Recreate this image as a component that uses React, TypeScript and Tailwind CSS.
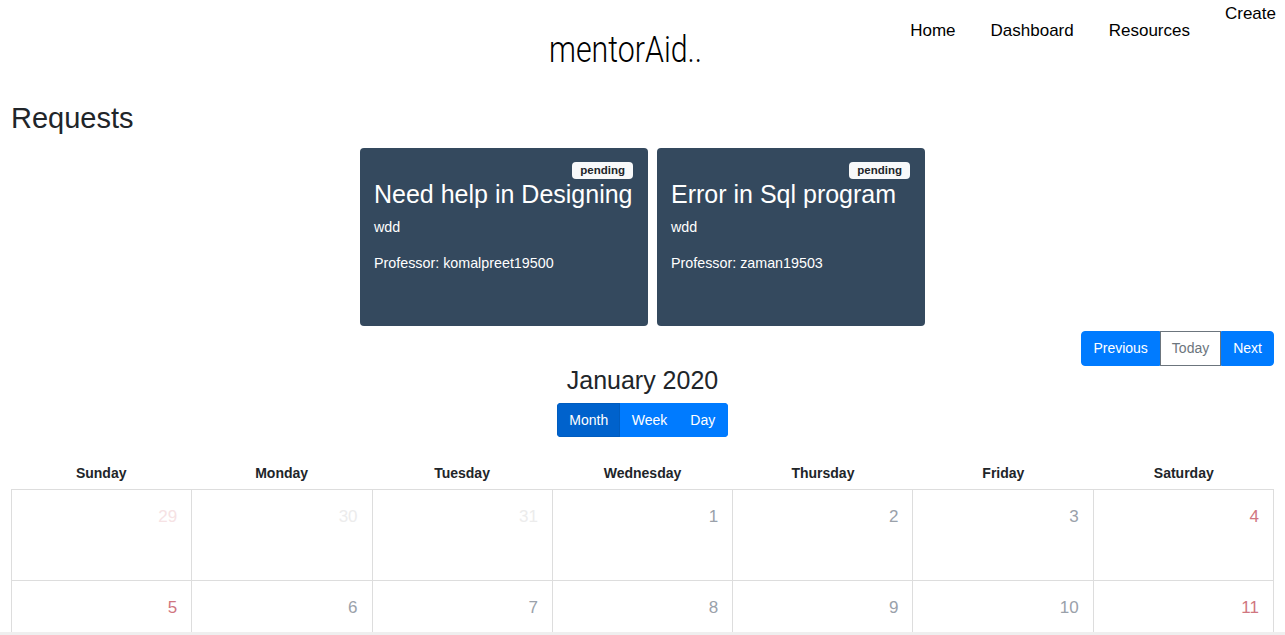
import React from "react";

const weeks: { d: number; muted?: boolean }[][] = [
  [{ d: 29, muted: true }, { d: 30, muted: true }, { d: 31, muted: true }, { d: 1 }, { d: 2 }, { d: 3 }, { d: 4 }],
  [{ d: 5 }, { d: 6 }, { d: 7 }, { d: 8 }, { d: 9 }, { d: 10 }, { d: 11 }],
  [{ d: 12 }, { d: 13 }, { d: 14 }, { d: 15 }, { d: 16 }, { d: 17 }, { d: 18 }],
  [{ d: 19 }, { d: 20 }, { d: 21 }, { d: 22 }, { d: 23 }, { d: 24 }, { d: 25 }],
  [{ d: 26 }, { d: 27 }, { d: 28 }, { d: 29 }, { d: 30 }, { d: 31 }, { d: 1, muted: true }],
];

const days = ["Sunday", "Monday", "Tuesday", "Wednesday", "Thursday", "Friday", "Saturday"];

function numColor(col: number, muted?: boolean) {
  const weekend = col === 0 || col === 6;
  if (muted) return weekend ? "text-[#f6e2e4]" : "text-[#ececec]";
  return weekend ? "text-[#d0767f]" : "text-[#9aa1aa]";
}

function Card({ title, prof, w }: { title: string; prof: string; w: string }) {
  return (
    <div className={`${w} h-[178px] bg-[#34495e] rounded-[4px] pt-[14px] pl-[14px] pr-[15px] text-white`}>
      <div className="flex justify-end">
        <span className="bg-[#f8f9fa] text-[#212529] text-[11.5px] font-bold leading-[17px] h-[17px] px-[8px] rounded-[4px]">
          pending
        </span>
      </div>
      <h5 className="text-[25px] leading-[30px] mb-[8px] whitespace-nowrap">{title}</h5>
      <p className="text-[14.3px] leading-[21px] mb-[15px]">wdd</p>
      <p className="text-[14.3px] leading-[21px]">Professor: {prof}</p>
    </div>
  );
}

export default function App() {
  return (
    <div className="min-h-screen bg-white text-[#212529]" style={{ fontFamily: '"Liberation Sans", Arial, sans-serif' }}>
      <header className="h-[101px] flex items-start">
        <div className="ml-[549px] mt-[28px] w-[152px]">
          <div
            className="inline-block origin-left scale-x-[0.82] text-[37px] leading-[44px] text-black whitespace-nowrap font-light"
            style={{ fontFamily: 'Roboto, "DejaVu Sans Condensed", sans-serif' }}
          >
            mentorAid..
          </div>
        </div>
        <nav className="ml-auto mr-[9px] flex items-start gap-[35px] text-[17px] text-black">
          <a className="mt-[21px] leading-[20px]">Home</a>
          <a className="mt-[21px] leading-[20px]">Dashboard</a>
          <a className="mt-[21px] leading-[20px]">Resources</a>
          <a className="mt-[4px] leading-[20px]">Create</a>
        </nav>
      </header>

      <div className="px-[11px]">
        <h3 className="text-[29px] leading-[34px] mb-[13px]">Requests</h3>

        <div className="flex justify-center gap-[9px]">
          <Card title="Need help in Designing" prof="komalpreet19500" w="w-[288px]" />
          <Card title="Error in Sql program" prof="zaman19503" w="w-[268px]" />
        </div>

        <div className="flex justify-end mt-[5px]">
          <div className="flex text-[14px] leading-[21px]">
            <button className="px-[11px] py-[6px] border border-[#007bff] bg-[#007bff] text-white rounded-l-[4px]">Previous</button>
            <button className="px-[11px] py-[6px] border border-[#6c757d] bg-white text-[#6c757d]">Today</button>
            <button className="px-[11px] py-[6px] border border-[#007bff] bg-[#007bff] text-white rounded-r-[4px]">Next</button>
          </div>
        </div>

        <div className="text-center text-[25px] leading-[30px] -mt-[1px]">January 2020</div>

        <div className="flex justify-center mt-[8px]">
          <div className="flex text-[14px] leading-[20px] text-white rounded-[4px] overflow-hidden">
            <button className="px-[11px] py-[6px] bg-[#0062cc] border border-[#005cbf]">Month</button>
            <button className="px-[11.5px] py-[6px] bg-[#007bff] border-y border-[#007bff]">Week</button>
            <button className="px-[11.5px] py-[6px] bg-[#007bff] border border-[#007bff] border-l-0">Day</button>
          </div>
        </div>

        <div className="mt-[18px]">
          <div className="grid grid-cols-7 h-[34px] pt-[2px] items-center text-[14px] font-bold">
            {days.map((d) => (
              <div key={d} className="text-center">{d}</div>
            ))}
          </div>
          <div className="border-l border-t border-[#dddddd]">
            {weeks.map((w, i) => (
              <div key={i} className="grid grid-cols-7 h-[91px]">
                {w.map((c, j) => (
                  <div key={j} className="border-r border-b border-[#dddddd] text-right pr-[14px] pt-[14px]">
                    <span className={`text-[17px] leading-[25px] ${numColor(j, c.muted)}`}>{c.d}</span>
                  </div>
                ))}
              </div>
            ))}
          </div>
        </div>
      </div>
      <div className="fixed left-0 right-0 bottom-0 h-[3px] bg-[#efefef]" />
    </div>
  );
}
